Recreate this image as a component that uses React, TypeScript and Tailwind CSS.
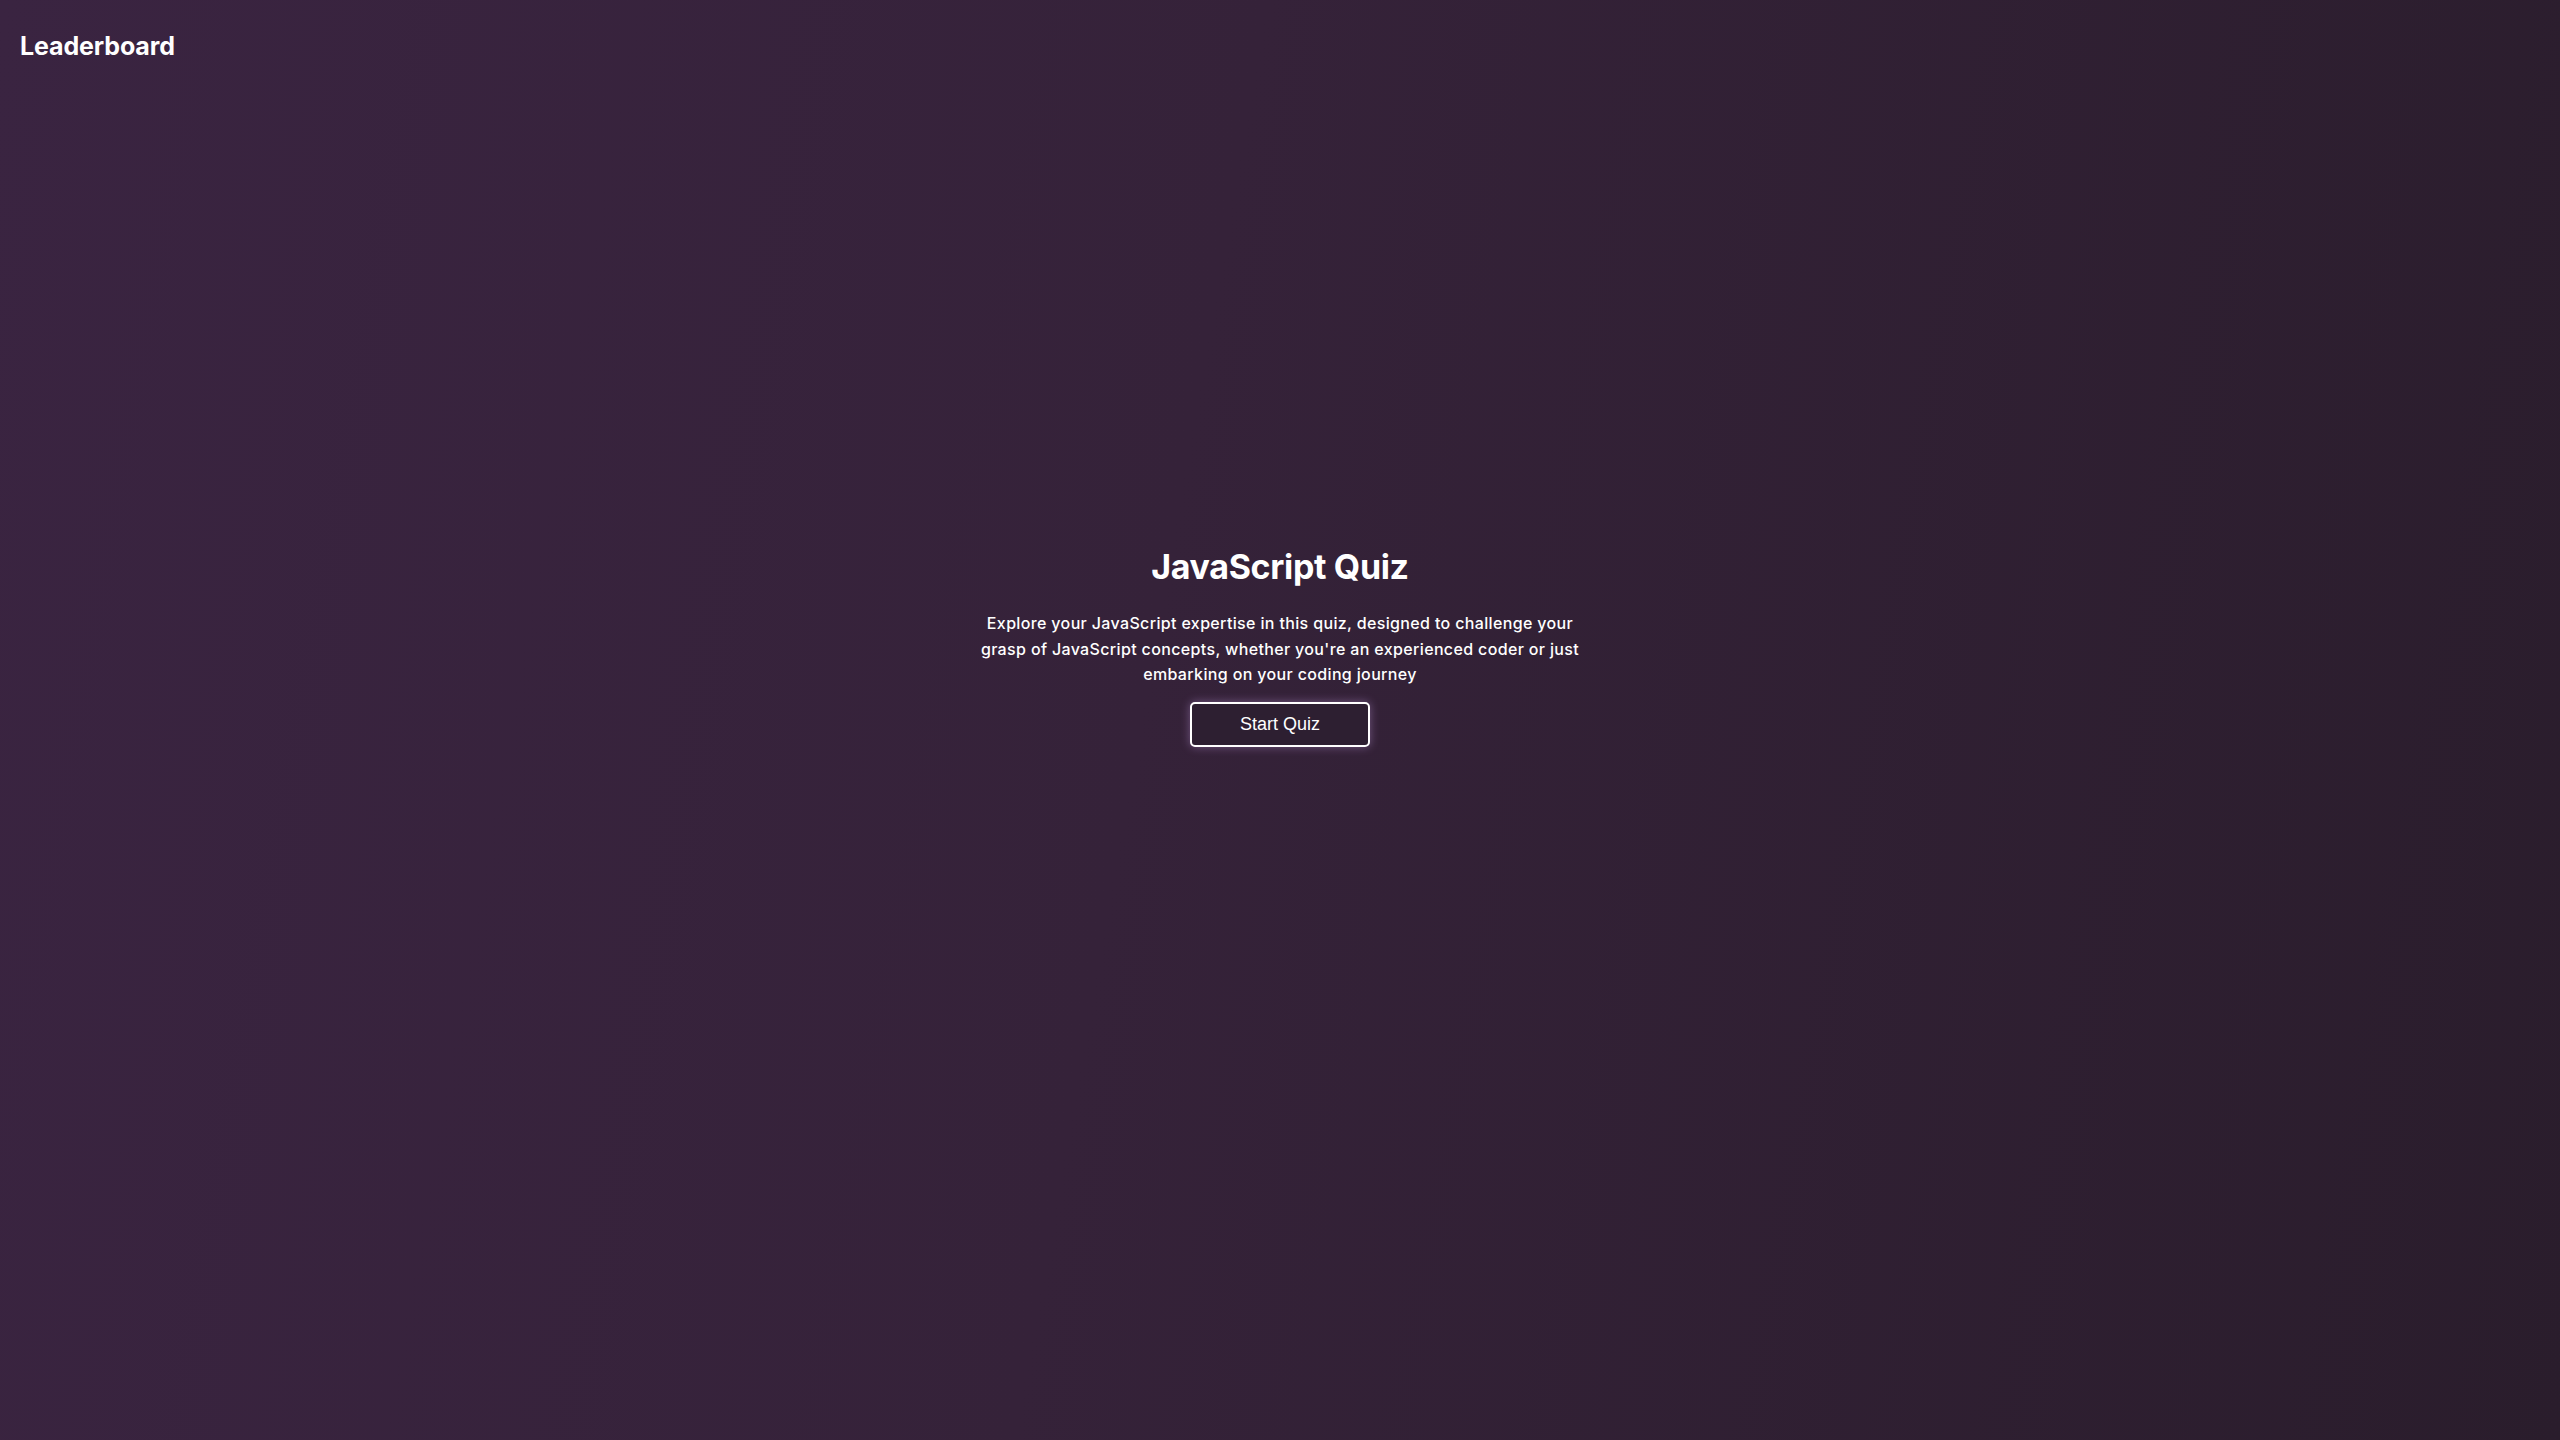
import React from 'react';

const sans = "font-['Inter','Noto_Sans',sans-serif]";

export default function App() {
  return (
    <div className={`min-h-screen w-full bg-[linear-gradient(100deg,#3a2441_0%,#352239_45%,#2a1d2c_100%)] text-white ${sans}`}>
      {/* Header */}
      <header className="flex h-[94px] items-center px-5">
        <a className="text-[25px] font-bold tracking-[-0.005em] text-white">Leaderboard</a>
      </header>

      {/* Intro */}
      <main className="flex flex-col items-center pt-[446px]">
        <h1 className="text-[34px] leading-[54px] font-bold tracking-[-0.01em] text-white">JavaScript Quiz</h1>
        <p className="mt-[17px] max-w-[610px] text-center text-[16px] leading-[25.5px] font-medium tracking-[0.022em] text-white">
          Explore your JavaScript expertise in this quiz, designed to challenge your grasp of JavaScript concepts,
          whether you're an experienced coder or just embarking on your coding journey
        </p>
        <button className="mt-[14px] flex h-[45px] w-[180px] items-center justify-center rounded-[5px] border-2 border-white bg-[#2d1f31] font-['Liberation_Sans',Arial,sans-serif] text-[18px] text-white shadow-[0_0_10px_rgba(190,150,220,0.45)]">
          Start Quiz
        </button>
      </main>
    </div>
  );
}
